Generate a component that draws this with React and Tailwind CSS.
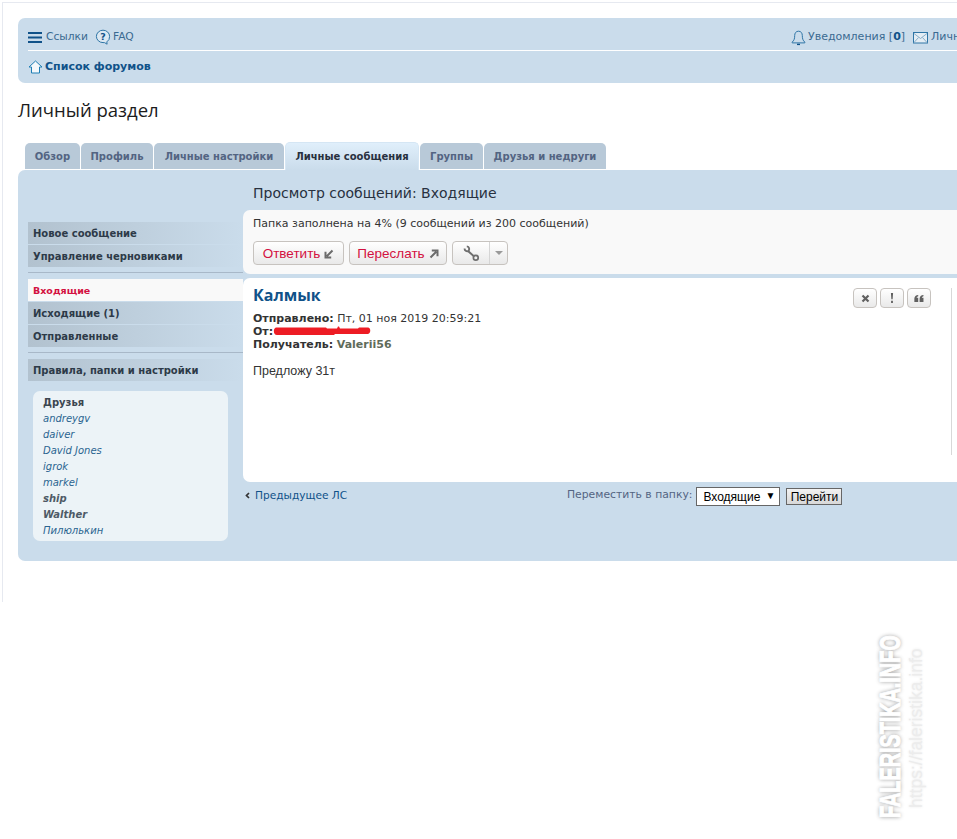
import React from "react";

const F = "font-['DejaVu_Sans',Verdana,sans-serif]";

function Burger() {
  return (
    <svg width="15" height="11" viewBox="0 0 15 11" className="mr-[3px]">
      <rect y="0" width="14" height="2" fill="#105289" />
      <rect y="4.5" width="14" height="2" fill="#105289" />
      <rect y="9" width="14" height="2" fill="#105289" />
    </svg>
  );
}
function Faq() {
  return (
    <svg width="16" height="16" viewBox="0 0 16 16" className="mr-[2px]">
      <path d="M8 1.2a6.6 6.2 0 0 0-6.6 6.2A6.6 6.2 0 0 0 8 13.6h1.5l2.6 1.6-.3-2.3a6.4 6.2 0 0 0 2.8-5.5A6.6 6.2 0 0 0 8 1.2z" fill="#dbe8f2" stroke="#2f75a6" strokeWidth="1" />
      <text x="8" y="11" textAnchor="middle" fontSize="9.5" fontWeight="700" fill="#105289" fontFamily="DejaVu Sans">?</text>
    </svg>
  );
}
function Bell() {
  return (
    <svg width="15" height="16" viewBox="0 0 15 16" className="mr-[2px]">
      <path d="M7.5 1.2c-2.6 0-3.8 2-3.8 4.3 0 3.4-.7 5-2.5 6.6v.8h12.6v-.8c-1.8-1.6-2.5-3.2-2.5-6.6 0-2.3-1.2-4.3-3.8-4.3z" fill="none" stroke="#2f75a6" strokeWidth="1" />
      <path d="M6 14.4h3" stroke="#105289" strokeWidth="1.4" />
    </svg>
  );
}
function Mail() {
  return (
    <svg width="15" height="12" viewBox="0 0 15 12" className="mr-[3px]">
      <rect x="0.5" y="0.5" width="14" height="10.5" fill="#e4edf4" stroke="#2f75a6" />
      <path d="M1 1.5l6.5 5 6.5-5M1 10.5l4.5-5M14 10.5l-4.5-5" fill="none" stroke="#7da6c4" strokeWidth="0.9" />
    </svg>
  );
}
function Home() {
  return (
    <svg width="15" height="14" viewBox="0 0 15 14" className="mr-[2px] -mt-[1px]">
      <path d="M7.5 1L1 7h2.5v6h8V7H14z" fill="#f4f8fb" stroke="#1f7fb5" strokeWidth="1" strokeLinejoin="round" />
    </svg>
  );
}
function ArrowDL() {
  return (
    <svg width="10" height="10" viewBox="0 0 10 10" className="ml-[4px] -mt-[1px]">
      <path d="M8.5 1.5L2.8 7.2M1.5 2.8v5.7h5.7" fill="none" stroke="#6b6b6b" strokeWidth="2" />
    </svg>
  );
}
function ArrowUR() {
  return (
    <svg width="10" height="10" viewBox="0 0 10 10" className="ml-[4px] -mt-[1px]">
      <path d="M1.5 8.5l5.7-5.7M2.8 1.5h5.7v5.7" fill="none" stroke="#6b6b6b" strokeWidth="2" />
    </svg>
  );
}
function Wrench() {
  return (
    <svg width="17" height="17" viewBox="0 0 17 17">
      <path d="M1.6 3.6a2.7 2.7 0 0 0 3.6 2.6L10.6 11" fill="none" stroke="#6e6e6e" strokeWidth="1.9" />
      <path d="M5.2 6.2A2.7 2.7 0 0 0 3.8 1.4" fill="none" stroke="#6e6e6e" strokeWidth="1.9" />
      <circle cx="12.8" cy="12.8" r="2.4" fill="none" stroke="#6e6e6e" strokeWidth="1.7" />
    </svg>
  );
}

function Tab({ children, w, active }) {
  return active ? (
    <div className={`${w} h-[28px] rounded-t-[5px] bg-gradient-to-b from-[#e0effb] to-[#cadceb] border border-b-0 border-[#d5e6f4] flex items-start justify-center pt-[6px] text-[10px] font-bold text-[#28313f]`}>
      {children}
    </div>
  ) : (
    <div className={`${w} h-[26px] mb-[1px] rounded-t-[5px] bg-[#b8c9d8] flex items-center justify-center pt-[1px] text-[10px] font-bold text-[#536482]`}>
      {children}
    </div>
  );
}

function Side({ children, active, mt }) {
  return (
    <div
      className={`h-[22px] flex items-center pl-[5px] text-[10px] font-bold ${mt || ""} ${
        active ? "bg-[#f9f9f9] text-[#d31141] !text-[9.5px] pt-[3px]" : "bg-gradient-to-r from-[#b2c2cf] to-[#cadceb] text-[#2d3a48] pt-[1px]"
      }`}
    >
      {children}
    </div>
  );
}

function Friend({ children, bold }) {
  return (
    <div className={`h-[16px] leading-[16px] text-[10px] italic ${bold ? "font-bold text-[#4e5a66]" : "text-[#2a6490]"}`}>{children}</div>
  );
}

function Btn({ children, w }) {
  return (
    <div className={`${w} h-[24px] rounded-[4px] border border-[#c7c3bf] bg-gradient-to-b from-white to-[#e9e9e9] flex items-center justify-center pt-[2px] text-[13.5px] text-[#d31141] font-['Liberation_Sans',sans-serif]`}>
      {children}
    </div>
  );
}

function Mini({ children }) {
  return (
    <div className="w-[24px] h-[20px] rounded-[4px] border border-[#c7c3bf] bg-gradient-to-b from-white to-[#e9e9e9] flex items-center justify-center text-[#606060]">
      {children}
    </div>
  );
}

export default function App() {
  return (
    <div className={`${F} relative w-[957px] h-[839px] overflow-hidden bg-white text-[11px] text-[#333]`}>
      <div className="ml-[2px] mt-[2px] w-[1100px] h-[600px] border-t border-l border-[#e6e9f0] pt-[15px] pl-[15px]">
        {/* navbar */}
        <div className="w-[1060px] h-[65px] rounded-[7px] bg-[#cadceb] px-[10px] pt-[3px]">
          <div className="h-[30px] pt-[4px] border-b border-white flex items-center text-[#105289]">
            <div className="flex items-center w-[763px]">
              <Burger />
              <span className="text-[#3a6a91] text-[10.7px]">Ссылки</span>
              <span className="ml-[7px] flex items-center">
                <Faq />
                <span className="text-[#3a6a91] text-[10.7px]">FAQ</span>
              </span>
            </div>
            <div className="flex items-center whitespace-nowrap">
              <Bell />
              <span className="text-[#3a6a91]">Уведомления [<b className="text-[#105289]">0</b>]</span>
              <span className="ml-[8px] flex items-center">
                <Mail />
                <span className="text-[#3a6a91]">Личные сообщения</span>
              </span>
            </div>
          </div>
          <div className="h-[30px] pt-[3px] flex items-center font-bold text-[#105289]">
            <Home />
            Список форумов
          </div>
        </div>

        {/* heading */}
        <h2 className="mt-[12px] mb-[18px] h-[30px] leading-[30px] text-[18.5px] text-[#1c1c1c] font-['Open_Sans','DejaVu_Sans',sans-serif] font-normal">
          Личный раздел
        </h2>

        {/* tabs */}
        <div className="ml-[7px] flex items-end gap-[1px] h-[27px]">
          <Tab w="w-[55px]">Обзор</Tab>
          <Tab w="w-[72px]">Профиль</Tab>
          <Tab w="w-[130px]">Личные настройки</Tab>
          <Tab w="w-[134px]" active>Личные сообщения</Tab>
          <Tab w="w-[63px]">Группы</Tab>
          <Tab w="w-[122px]">Друзья и недруги</Tab>
        </div>

        {/* panel */}
        <div className="w-[1060px] h-[391px] rounded-[7px] bg-[#cadceb] pl-[10px] flex">
          {/* sidebar */}
          <div className="w-[215px] shrink-0 pt-[52px]">
            <Side>Новое сообщение</Side>
            <Side mt="mt-[1px]">Управление черновиками</Side>
            <div className="mt-[5px] h-[1px] bg-[#a8b8c8]" />
            <Side active mt="mt-[6px]">Входящие</Side>
            <Side mt="mt-[1px]">Исходящие (1)</Side>
            <Side mt="mt-[1px]">Отправленные</Side>
            <div className="mt-[5px] h-[1px] bg-[#a8b8c8]" />
            <Side mt="mt-[6px]">Правила, папки и настройки</Side>
            <div className="mt-[10px] ml-[5px] w-[195px] h-[150px] rounded-[7px] bg-[#ecf3f7] pl-[10px] pt-[4px]">
              <div className="h-[16px] leading-[16px] text-[10px] font-bold text-[#3c4650]">Друзья</div>
              <Friend>andreygv</Friend>
              <Friend>daiver</Friend>
              <Friend>David Jones</Friend>
              <Friend>igrok</Friend>
              <Friend>markel</Friend>
              <Friend bold>ship</Friend>
              <Friend bold>Walther</Friend>
              <Friend>Пилюлькин</Friend>
            </div>
          </div>

          {/* main */}
          <div className="flex-1">
            <div className="h-[40px] pl-[10px] pt-[12px] text-[14px] leading-[22px] text-[#28313f] font-['DejaVu_Sans',sans-serif]">
              Просмотр сообщений: Входящие
            </div>
            <div className="h-[64px] rounded-l-[7px] bg-[#f9f9f9] pl-[10px] pt-[6px]">
              <div className="h-[15px] leading-[15px] text-[#333]">Папка заполнена на 4% (9 сообщений из 200 сообщений)</div>
              <div className="mt-[10px] flex gap-[5px]">
                <Btn w="w-[91px]">Ответить<ArrowDL /></Btn>
                <Btn w="w-[98px]">Переслать<ArrowUR /></Btn>
                <div className="w-[56px] h-[24px] rounded-[4px] border border-[#c7c3bf] bg-gradient-to-b from-white to-[#e9e9e9] flex">
                  <div className="w-[37px] flex items-center justify-center border-r border-[#d5d5d5]"><Wrench /></div>
                  <div className="flex-1 flex items-center justify-center">
                    <div className="w-0 h-0 border-x-[4px] border-x-transparent border-t-[4px] border-t-[#9a9a9a]" />
                  </div>
                </div>
              </div>
            </div>
            <div className="mt-[4px] h-[204px] rounded-l-[7px] bg-white pl-[10px] pt-[9px] flex">
              <div className="w-[600px] shrink-0">
                <div className="h-[16px] leading-[16px] text-[16px] font-['Open_Sans',sans-serif] font-bold text-[#105289]">Калмык</div>
                <div className="mt-[9px] leading-[13px] text-[#333]">
                  <div><b>Отправлено:</b> Пт, 01 ноя 2019 20:59:21</div>
                  <div className="relative">
                    <b>От:</b>
                    <svg width="98" height="10" viewBox="0 0 98 10" className="absolute left-[20px] top-[1px]">
                      <path d="M3 1.5h50l1 1h10l1-2h1l1 2h18l1-1h9c3 0 3 6 0 6.5H62l-1 1H4C0 9 0 2 3 1.5z" fill="#ed1c24" />
                    </svg>
                  </div>
                  <div><b>Получатель:</b> <b className="text-[#5f6b5a]">Valerii56</b></div>
                </div>
                <div className="mt-[13px] text-[12.5px] leading-[14px] font-['Liberation_Sans',sans-serif] text-[#333]">Предложу 31т</div>
              </div>
              <div className="flex gap-[3px] h-[20px] w-[78px] mt-[1px] shrink-0">
                <Mini>
                  <svg width="9" height="9" viewBox="0 0 9 9"><path d="M1.5 1.5l6 6M7.5 1.5l-6 6" stroke="#606060" strokeWidth="2.2" /></svg>
                </Mini>
                <Mini>
                  <svg width="4" height="10" viewBox="0 0 4 11"><path d="M.8 0h2.4l-.5 7H1.3zM1 8.4h2V11H1z" fill="#606060" /></svg>
                </Mini>
                <Mini>
                  <svg width="10" height="7" viewBox="0 0 11 8"><path d="M4.6 0v1.4C3.4 1.8 2.9 2.5 2.8 3.2h1.8V8H.2V4C.2 1.8 2 .2 4.6 0zM10.6 0v1.4C9.4 1.8 8.9 2.5 8.8 3.2h1.8V8H6.2V4C6.2 1.8 8 .2 10.6 0z" fill="#606060" /></svg>
                </Mini>
              </div>
              <div className="ml-[20px] mt-[1px] w-[1px] h-[167px] bg-[#d8d8d8]" />
            </div>
            <div className="mt-[5px] h-[17px] flex items-center">
              <svg width="5" height="7" viewBox="0 0 5 7" className="ml-[2px] mr-[5px]"><path d="M4 1L1.5 3.5 4 6" fill="none" stroke="#333" strokeWidth="1.7" /></svg>
              <span className="text-[#105289] text-[10.6px] w-[312px]">Предыдущее ЛС</span>
              <span className="text-[#536482] text-[10.8px]">Переместить в папку:</span>
              <div className="ml-[4px] mt-[2px] w-[84px] h-[19px] border border-[#666] bg-white flex items-center pl-[6px] font-['Liberation_Sans',sans-serif] text-[12px] text-black relative">
                Входящие
                <span className="absolute right-[4px] top-[0px] text-[10px]">▼</span>
              </div>
              <div className="ml-[6px] mt-[2px] w-[56px] h-[17px] border border-[#666] bg-gradient-to-b from-[#f2f2f2] to-[#d8d8d8] flex items-center justify-center font-['Liberation_Sans',sans-serif] text-[12px] text-black">
                Перейти
              </div>
            </div>
          </div>
        </div>
      </div>

      {/* watermark */}
      <div className="absolute left-[878px] top-[636px] h-[182px] w-[24px] flex justify-center [writing-mode:vertical-rl] rotate-180 pointer-events-none">
        <span className="text-[30px] leading-[24px] font-bold text-white [-webkit-text-stroke:1px_white] font-['Liberation_Sans',sans-serif] [text-shadow:0_0_5px_#8c8c8c] whitespace-nowrap [transform:scaleY(0.66)]">FALERISTIKA.INFO</span>
      </div>
      <div className="absolute left-[906px] top-[640px] h-[176px] w-[20px] flex justify-center [writing-mode:vertical-rl] rotate-180 pointer-events-none">
        <span className="text-[17.5px] leading-[20px] text-[#ececec] font-['Liberation_Sans',sans-serif] whitespace-nowrap [text-shadow:0_0_3px_#e8e8e8]">https://faleristika.info</span>
      </div>
    </div>
  );
}
